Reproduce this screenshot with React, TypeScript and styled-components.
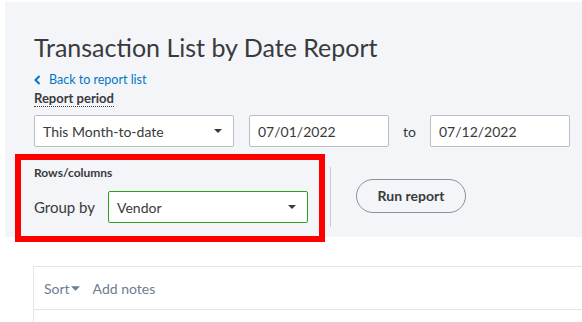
import React from 'react';
import styled, { createGlobalStyle } from 'styled-components';

const GlobalStyle = createGlobalStyle`
    body {
        margin: 0;
        background: #ffffff;
        font-family: Lato, "Open Sans", sans-serif;
        color: #393a3d;
        overflow: hidden;
    }
`;

// Grey report header
const Panel = styled.div`
    margin: 2px 0 0 5px;
    padding: 30px 0 1px 29px;
    background-color: #f4f5f8;
`;

const Title = styled.h1`
    margin: 0;
    font-size: 25px;
    line-height: 30px;
    font-weight: 400;
    color: #393a3d;
`;

const BackLink = styled.a`
    display: flex;
    align-items: center;
    gap: 8px;
    margin-top: 11px;
    font-size: 12.5px;
    line-height: 14px;
    color: #0077c5;
    text-decoration: none;
`;

const Label = styled.div`
    display: inline-block;
    font-size: 13px;
    line-height: 14px;
    font-weight: 700;
    color: #393a3d;
    border-bottom: 1px dotted #393a3d;
    padding-bottom: 1px;
`;

const Row = styled.div`
    display: flex;
    align-items: center;
    margin-top: 8px;
`;

const Field = styled.div<{ width: number; active?: boolean }>`
    box-sizing: border-box;
    display: flex;
    flex-shrink: 0;
    align-items: center;
    justify-content: space-between;
    width: ${({ width }) => width}px;
    height: 32px;
    padding: 0 11px 0 8px;
    background: #ffffff;
    border: 1px solid ${({ active }) => (active ? '#2ca01c' : '#babec5')};
    border-radius: 2px;
    font-size: 14px;
    color: #393a3d;
`;

const To = styled.span`
    margin: 0 14px 0 14px;
    font-size: 14px;
    color: #393a3d;
`;

const OptionsRow = styled.div`
    display: flex;
    align-items: center;
    margin-top: 13px;
`;

// outlined in red in the screenshot
const RowsSection = styled.section`
    box-sizing: border-box;
    width: 298px;
    margin-left: -13px;
    padding: 6px 12px 13px 13px;
    outline: 6px solid #ff0000;
`;

const SectionTitle = styled.div`
    font-size: 12px;
    line-height: 14px;
    font-weight: 700;
    color: #393a3d;
`;

const GroupRow = styled.div`
    display: flex;
    align-items: center;
    gap: 13px;
    margin-top: 11px;
`;

const GroupLabel = styled.span`
    white-space: nowrap;
    font-size: 15px;
    color: #393a3d;
`;

const Divider = styled.div`
    width: 1px;
    height: 60px;
    margin: 0 25px 2px 11px;
    background: #c9ccd1;
`;

const RunButton = styled.button`
    box-sizing: border-box;
    width: 110px;
    height: 34px;
    margin-bottom: 5px;
    background: transparent;
    border: 1px solid #8d9096;
    border-radius: 17px;
    font-family: Lato, sans-serif;
    font-size: 14px;
    font-weight: 700;
    color: #393a3d;
`;

// Report body
const ReportCard = styled.div`
    box-sizing: border-box;
    height: 60px;
    margin: 29px 0 0 33px;
    border: 1px solid #e3e5e8;
    border-right: none;
    border-bottom: none;
    background: #ffffff;
`;

const Toolbar = styled.div`
    display: flex;
    align-items: center;
    height: 42px;
    padding-left: 10px;
    border-bottom: 1px solid #e3e5e8;
    font-size: 14px;
    color: #6b7c93;
`;

const SortLink = styled.span`
    display: flex;
    align-items: center;
    gap: 1px;
    margin-right: 13px;
`;

const Caret = ({ color = '#393a3d', w = 8, h = 4 }: { color?: string; w?: number; h?: number }) => (
    <svg width={w} height={h} viewBox="0 0 8 4">
        <polygon points="0,0 8,0 4,4" fill={color} />
    </svg>
);

const App: React.FC = () => {
    return (
        <>
            <GlobalStyle />
            <Panel>
                <Title>Transaction List by Date Report</Title>
                <BackLink href="#">
                    <svg width="7" height="10" viewBox="0 0 7 10">
                        <polyline points="5.5,1 1.5,5 5.5,9" fill="none" stroke="#0077c5" strokeWidth="2" />
                    </svg>
                    Back to report list
                </BackLink>
                <Label>Report period</Label>
                <Row>
                    <Field width={200}>
                        This Month-to-date
                        <Caret />
                    </Field>
                    <Field width={140} style={{ marginLeft: 15 }}>07/01/2022</Field>
                    <To>to</To>
                    <Field width={140}>07/12/2022</Field>
                </Row>
                <OptionsRow>
                    <RowsSection>
                        <SectionTitle>Rows/columns</SectionTitle>
                        <GroupRow>
                            <GroupLabel>Group by</GroupLabel>
                            <Field width={200} active>
                                Vendor
                                <Caret />
                            </Field>
                        </GroupRow>
                    </RowsSection>
                    <Divider />
                    <RunButton>Run report</RunButton>
                </OptionsRow>
            </Panel>
            <ReportCard>
                <Toolbar>
                    <SortLink>
                        Sort
                        <Caret color="#6b7c93" w={9} h={5} />
                    </SortLink>
                    Add notes
                </Toolbar>
            </ReportCard>
        </>
    );
};

export default App;
